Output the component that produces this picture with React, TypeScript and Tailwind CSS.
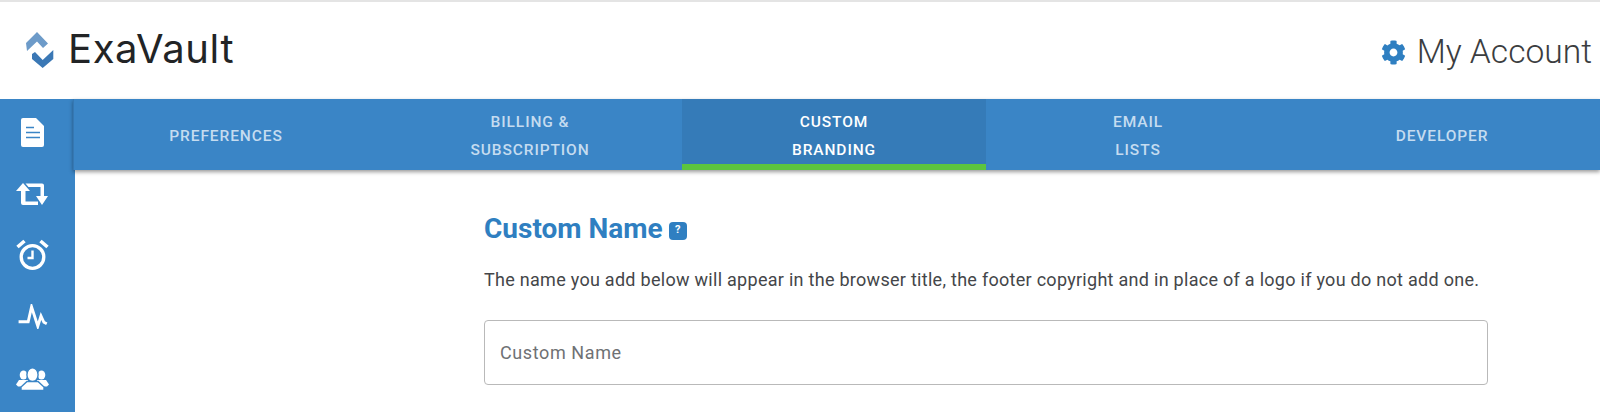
import { FaCog } from 'react-icons/fa';

const tabs = [
  { lines: ['PREFERENCES'], width: 'w-[304px]' },
  { lines: ['BILLING &', 'SUBSCRIPTION'], width: 'w-[304px]' },
  { lines: ['CUSTOM', 'BRANDING'], width: 'w-[304px]', active: true },
  { lines: ['EMAIL', 'LISTS'], width: 'w-[304px]' },
  { lines: ['DEVELOPER'], width: 'w-[304px]' },
];

function FileIcon() {
  return (
    <svg viewBox="0 0 23 29" className="w-[23px] h-[29px] block">
      <path d="M2 0h13l8 8v19a2 2 0 0 1-2 2H2a2 2 0 0 1-2-2V2a2 2 0 0 1 2-2z" fill="white" />
      <path d="M5 9.500h8M5 14.500h14M5 19.500h14" stroke="#3a85c6" strokeWidth="1.600" />
    </svg>
  );
}

function RetweetIcon() {
  return (
    <svg viewBox="0 0 32 23" className="w-[32px] h-[23px] block" fill="white">
      <path d="M7 0 14 8H9.500v10.500H22V22H7Q5 22 5 20V8H0z" />
      <path d="M9.500.5H26q2 0 2 2V13h4l-6 9-6-9h4.500V4H12.500z" />
    </svg>
  );
}

function AlarmIcon() {
  return (
    <svg viewBox="0 0 33 31" className="w-[33px] h-[31px] block" fill="none" stroke="white">
      <circle cx="16.500" cy="18" r="11.300" strokeWidth="3.300" />
      <path d="M16.500 11.500v7.500h-5" strokeWidth="2.400" />
      <path d="M1.500 8 8.500 2M31.500 8 24.500 2" strokeWidth="3.600" />
    </svg>
  );
}

function PulseIcon() {
  return (
    <svg viewBox="0 0 30 26" className="w-[30px] h-[25px] block" fill="none" stroke="white" strokeWidth="3">
      <path d="M0 18.500h10L13.500 3l6.500 20 3.300-10.500 3 6.500 3 1.500" />
    </svg>
  );
}

function UsersIcon() {
  return (
    <svg viewBox="0 0 33 22" className="w-[33px] h-[22px] block" fill="white">
      <ellipse cx="7.500" cy="7" rx="3.800" ry="4.500" />
      <ellipse cx="25.500" cy="7" rx="3.800" ry="4.500" />
      <path d="M0 16.500 3 12h9v6.500H2z" />
      <path d="M33 16.500 30 12h-9v6.500h10z" />
      <g stroke="#3a85c6" strokeWidth="1.400">
        <ellipse cx="16.500" cy="6.800" rx="5.600" ry="7" />
        <path d="M5 22.500v-3.500L11 13.500h11L28 19v3.500z" />
      </g>
    </svg>
  );
}

export default function App() {
  return (
    <div className="w-[1600px] h-[412px] overflow-hidden bg-white border-t-2 border-[#e4e4e4] font-['Roboto',sans-serif]">
      {/* Header */}
      <header className="h-[97px] flex items-center justify-between pl-[25px] pr-[8px]">
        <div className="flex items-center gap-[13px] pb-[1px]">
          <svg viewBox="0 0 30 38" className="w-[30px] h-[38px]">
            <path d="M12 1 23 12.500 18 17 12 10.500 2 20 1 12z" fill="#6d9bc9" />
            <path d="M7 23v5l10.700 9 10.600-9v-9L17.700 29 10 21z" fill="#3b78b5" />
          </svg>
          <span className="font-['Inter',sans-serif] text-[40px] leading-none tracking-[0.6px] -mt-[2px] text-[#222426]">ExaVault</span>
        </div>
        <div className="flex items-center gap-[11px] pt-[3px]">
          <FaCog className="text-[#2f7fc1] w-[25px] h-[25px]" />
          <span className="text-[33.600px] leading-none font-light text-[#3b3d40]">My Account</span>
        </div>
      </header>

      <div className="flex h-[313px]">
        {/* Sidebar */}
        <aside className="w-[75px] shrink-0 bg-[#3a85c6] flex flex-col pl-[16px] pt-[19px] text-white">
          <div className="ml-[5px]"><FileIcon /></div>
          <div className="mt-[36px]"><RetweetIcon /></div>
          <div className="mt-[33px]"><AlarmIcon /></div>
          <div className="mt-[34px] ml-[2px]"><PulseIcon /></div>
          <div className="mt-[39px]"><UsersIcon /></div>
        </aside>

        <main className="flex-1 min-w-0">
          {/* Tabs */}
          <nav className="h-[71px] bg-[#3a85c6] flex border-l border-[#3578b3] -ml-[2px] shadow-[0_2px_4px_rgba(0,0,0,0.4)]">
            {tabs.map((tab) => (
              <div
                key={tab.lines[0]}
                className={
                  tab.active
                    ? `${tab.width} bg-[#357bb8] border-b-[6px] border-[#5cc43f] pt-[8px] flex flex-col items-center justify-center text-white`
                    : `${tab.width} pt-[2px] flex flex-col items-center justify-center text-[#c5dcf0]`
                }
              >
                {tab.lines.map((line) => (
                  <div key={line} className="text-[15.500px] leading-[28px] font-medium tracking-[0.9px]">{line}</div>
                ))}
              </div>
            ))}
          </nav>

          {/* Content */}
          <section className="ml-[409px] w-[1004px] pt-[44px]">
            <div className="flex items-center gap-[6px]">
              <h2 className="text-[28px] leading-[30px] font-bold text-[#2f7fc1]">Custom Name</h2>
              <span className="w-[18px] h-[18px] mt-[3px] rounded-[4px] bg-[#2f7fc1] text-white text-[11px] font-bold flex items-center justify-center">?</span>
            </div>
            <p className="mt-[24px] text-[18px] leading-[24px] tracking-[0.28px] text-[#444649]">
              The name you add below will appear in the browser title, the footer copyright and in place of a logo if you do not add one.
            </p>
            <input
              placeholder="Custom Name"
              className="mt-[28px] block w-full h-[65px] px-[15px] text-[18px] tracking-[0.6px] rounded-[4px] border border-[#b9b9b9] bg-white outline-none placeholder:text-[#6f7174]"
            />
          </section>
        </main>
      </div>
    </div>
  );
}
